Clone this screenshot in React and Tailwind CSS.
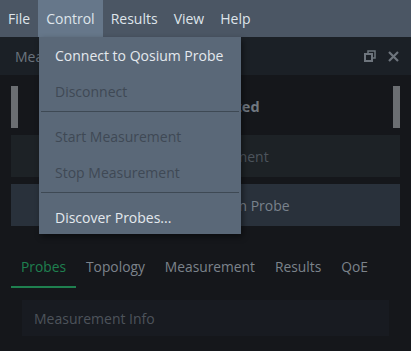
import React from 'react';

const menus = ['File', 'Control', 'Results', 'View', 'Help'];
const tabs = ['Probes', 'Topology', 'Measurement', 'Results', 'QoE'];

function Separator() {
  return <div className="mx-[2px] mt-[2px] mb-[6px] h-px bg-[#3e4954]" />;
}

function MenuItem({ label, disabled }) {
  return (
    <div className={`h-[36px] flex items-center pl-[16px] ${disabled ? 'text-[#3f4955]' : 'text-[#e4e9ee]'}`}>
      {label}
    </div>
  );
}

export default function App() {
  return (
    <main
      className="relative w-[411px] h-[351px] overflow-hidden bg-[#15171b] text-[14px]"
      style={{ fontFamily: '"Open Sans", "Noto Sans", sans-serif' }}
    >
      {/* menu bar */}
      <nav className="h-[37px] flex items-stretch bg-[#4b5664] text-[#dfe5eb] text-[14px]">
        {menus.map(m => (
          <div
            key={m}
            className={`px-2 flex items-center ${m === 'Control' ? 'bg-[#66778a]' : ''}`}
          >
            {m}
          </div>
        ))}
      </nav>

      {/* dock title */}
      <header className="h-[38px] flex items-center justify-between bg-[#1b2026] pl-[15px] pr-[12px]">
        <span className="text-[#6b747e]">Measurement Control</span>
        <div className="flex items-center gap-[12px] text-[#6e757d]">
          <svg width="12" height="12" viewBox="0 0 12 12">
            <rect x="1" y="4" width="7" height="7" fill="none" stroke="currentColor" strokeWidth="2" />
            <path d="M4 4V1h7v7H8" fill="none" stroke="currentColor" strokeWidth="1.5" />
          </svg>
          <svg width="11" height="11" viewBox="0 0 11 11">
            <path d="M1 1l9 9M10 1l-9 9" stroke="currentColor" strokeWidth="2.2" />
          </svg>
        </div>
      </header>

      {/* dock body */}
      <section className="px-[11px] pt-[11px]">
        <div className="h-[42px] flex items-stretch">
          <div className="w-[7px] bg-[#6b6e72]" />
          <div className="flex-1 flex items-center justify-center font-bold text-[#707880] text-[14.5px]">
            Not Connected
          </div>
          <div className="w-[7px] bg-[#6b6e72]" />
        </div>

        <div className="mt-[7px] h-[42px] flex items-center justify-center bg-[#1d2226] text-[#4c545c]">
          Start Measurement
        </div>
        <div className="mt-[7px] h-[42px] flex items-center justify-center bg-[#29313b] text-[#79828c]">
          Connect to Qosium Probe
        </div>

        <div className="mt-[24px] flex text-[13.8px] text-[#7c838b]">
          {tabs.map(t => (
            <div
              key={t}
              className={`px-[10px] h-[38px] pb-[2px] flex items-center border-b-2 ${t === 'Probes' ? 'text-[#1f8050] border-[#1f8050]' : 'border-transparent'}`}
            >
              {t}
            </div>
          ))}
        </div>

        <div className="mt-[12px] mx-[11px] h-[36px] flex items-center pl-[12px] bg-[#181b21] text-[#4d535b]">
          Measurement Info
        </div>
      </section>

      {/* Control dropdown */}
      <div className="absolute left-[39px] top-[37px] w-[202px] h-[197px] bg-[#5a6878] shadow-[2px_3px_6px_rgba(0,0,0,0.45)]">
        <MenuItem label="Connect to Qosium Probe" />
        <MenuItem label="Disconnect" disabled />
        <Separator />
        <MenuItem label="Start Measurement" disabled />
        <MenuItem label="Stop Measurement" disabled />
        <Separator />
        <MenuItem label="Discover Probes..." />
      </div>
    </main>
  );
}
